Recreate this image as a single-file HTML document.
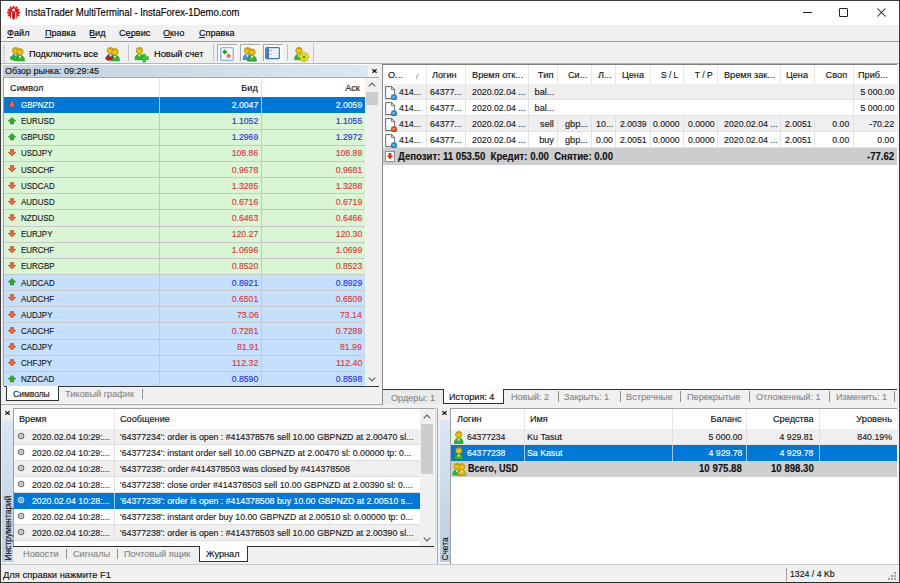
<!DOCTYPE html>
<html><head><meta charset="utf-8">
<style>
*{margin:0;padding:0;box-sizing:border-box}
html,body{width:900px;height:583px;overflow:hidden;background:#f0f0f0;font-family:"Liberation Sans",sans-serif;font-size:10px;color:#1a1a1a;position:relative}
.a{position:absolute}
.t{position:absolute;white-space:nowrap;transform:scaleX(0.926);-webkit-text-stroke-width:0.15px}
svg{position:absolute;overflow:visible}
</style></head><body>

<div class="a" style="left:0px;top:0px;width:900px;height:25px;background:#ffffff;"></div>
<svg style="left:7px;top:5.5px" width="14" height="14" viewBox="0 0 14 14">
<g transform="translate(6.6 6.5)" fill="#e21a1a"><rect x="-0.9" y="-6.6" width="1.8" height="2.6" transform="rotate(0)"/><rect x="-0.9" y="-6.6" width="1.8" height="2.6" transform="rotate(30)"/><rect x="-0.9" y="-6.6" width="1.8" height="2.6" transform="rotate(60)"/><rect x="-0.9" y="-6.6" width="1.8" height="2.6" transform="rotate(90)"/><rect x="-0.9" y="-6.6" width="1.8" height="2.6" transform="rotate(120)"/><rect x="-0.9" y="-6.6" width="1.8" height="2.6" transform="rotate(150)"/><rect x="-0.9" y="-6.6" width="1.8" height="2.6" transform="rotate(180)"/><rect x="-0.9" y="-6.6" width="1.8" height="2.6" transform="rotate(210)"/><rect x="-0.9" y="-6.6" width="1.8" height="2.6" transform="rotate(240)"/><rect x="-0.9" y="-6.6" width="1.8" height="2.6" transform="rotate(270)"/><rect x="-0.9" y="-6.6" width="1.8" height="2.6" transform="rotate(300)"/><rect x="-0.9" y="-6.6" width="1.8" height="2.6" transform="rotate(330)"/><circle r="5.2"/></g>
<circle cx="6.7" cy="3.9" r="1.5" fill="#fff"/>
<rect x="4.1" y="6" width="1.1" height="6.6" fill="#fff"/>
<rect x="8.1" y="6" width="1.1" height="6.6" fill="#fff"/>
<rect x="5.7" y="5.8" width="1.9" height="7.6" fill="#b41818"/>
</svg>
<div class="t" style="top:5px;height:16px;line-height:16px;font-size:10.3px;color:#000;transform:scaleX(0.922);left:25px;transform-origin:0 50%;">InstaTrader MultiTerminal - InstaForex-1Demo.com</div>
<div class="a" style="left:803px;top:12px;width:9px;height:1px;background:#222"></div>
<div class="a" style="left:839px;top:8px;width:9px;height:8.5px;border:1.1px solid #222;border-radius:1px"></div>
<svg style="left:876.5px;top:8.3px" width="9" height="9" viewBox="0 0 9 9"><path d="M0.5 0.5L8.5 8.5M8.5 0.5L0.5 8.5" stroke="#222" stroke-width="1.05"/></svg>
<div class="a" style="left:0px;top:0px;width:900px;height:1px;background:#3c3c3c"></div>
<div class="a" style="left:0px;top:0px;width:1px;height:583px;background:#3c3c3c"></div>
<div class="a" style="left:899px;top:0px;width:1px;height:583px;background:#3c3c3c"></div>
<div class="a" style="left:0px;top:582px;width:900px;height:1px;background:#2a2a2a"></div>
<div class="t" style="top:25px;height:16px;line-height:16px;font-size:9.9px;color:#000;transform:scaleX(0.926);left:6.5px;transform-origin:0 50%;">Файл</div>
<div class="t" style="top:25px;height:16px;line-height:16px;font-size:9.9px;color:#000;transform:scaleX(0.92);left:44.5px;transform-origin:0 50%;">Правка</div>
<div class="t" style="top:25px;height:16px;line-height:16px;font-size:9.9px;color:#000;transform:scaleX(0.926);left:89.3px;transform-origin:0 50%;">Вид</div>
<div class="t" style="top:25px;height:16px;line-height:16px;font-size:9.9px;color:#000;transform:scaleX(0.926);left:118.7px;transform-origin:0 50%;">Сервис</div>
<div class="t" style="top:25px;height:16px;line-height:16px;font-size:9.9px;color:#000;transform:scaleX(0.926);left:163px;transform-origin:0 50%;">Окно</div>
<div class="t" style="top:25px;height:16px;line-height:16px;font-size:9.9px;color:#000;transform:scaleX(0.921);left:198.7px;transform-origin:0 50%;">Справка</div>
<div class="a" style="left:1px;top:41px;width:898px;height:1px;background:#a0a0a0"></div>
<div class="a" style="left:1px;top:63px;width:898px;height:1px;background:#b4b4b4"></div>
<div class="a" style="left:7px;top:37px;width:6px;height:1px;background:#2a2a2a"></div>
<div class="a" style="left:45px;top:37px;width:6px;height:1px;background:#2a2a2a"></div>
<div class="a" style="left:89.5px;top:37px;width:6px;height:1px;background:#2a2a2a"></div>
<div class="a" style="left:127.5px;top:37px;width:5px;height:1px;background:#2a2a2a"></div>
<div class="a" style="left:163.5px;top:37px;width:7px;height:1px;background:#2a2a2a"></div>
<div class="a" style="left:199px;top:37px;width:6px;height:1px;background:#2a2a2a"></div>
<div class="a" style="left:3px;top:45px;width:2px;height:1px;background:#c4c4c4"></div>
<div class="a" style="left:3px;top:47px;width:2px;height:1px;background:#c4c4c4"></div>
<div class="a" style="left:3px;top:49px;width:2px;height:1px;background:#c4c4c4"></div>
<div class="a" style="left:3px;top:51px;width:2px;height:1px;background:#c4c4c4"></div>
<div class="a" style="left:3px;top:53px;width:2px;height:1px;background:#c4c4c4"></div>
<div class="a" style="left:3px;top:55px;width:2px;height:1px;background:#c4c4c4"></div>
<div class="a" style="left:3px;top:57px;width:2px;height:1px;background:#c4c4c4"></div>
<div class="a" style="left:3px;top:59px;width:2px;height:1px;background:#c4c4c4"></div>
<div class="a" style="left:3px;top:61px;width:2px;height:1px;background:#c4c4c4"></div>
<svg style="left:10px;top:46px" width="16" height="16" viewBox="0 0 16 16"><g transform="translate(0.5 0) scale(1.0)"><path d="M0.6 13.6C0.6 9.6 2.4 8.4 5 8.4C7.6 8.4 9.4 9.6 9.4 13.6Z" fill="#3aa0d8" stroke="#1d6aa0" stroke-width="0.7"/><path d="M3.7 8.6L5 11.6L6.3 8.6Z" fill="#e8f8e8"/><circle cx="5" cy="4.6" r="3.2" fill="#f2c200" stroke="#a87c00" stroke-width="0.7"/><path d="M2.2 3.6Q5 0.6 7.8 3.6Q5 2.6 2.2 3.6Z" fill="#a87c00" opacity="0.6"/></g><g transform="translate(5 1.2) scale(1.0)"><path d="M0.6 13.6C0.6 9.6 2.4 8.4 5 8.4C7.6 8.4 9.4 9.6 9.4 13.6Z" fill="#2db82d" stroke="#168a16" stroke-width="0.7"/><path d="M3.7 8.6L5 11.6L6.3 8.6Z" fill="#e8f8e8"/><circle cx="5" cy="4.6" r="3.2" fill="#f2c200" stroke="#a87c00" stroke-width="0.7"/><path d="M2.2 3.6Q5 0.6 7.8 3.6Q5 2.6 2.2 3.6Z" fill="#a87c00" opacity="0.6"/></g>
<path d="M0.5 11h3.6V9l3.4 3l-3.4 3v-2H0.5z" fill="#2ccc2c" stroke="#128a12" stroke-width="0.6"/></svg>
<div class="t" style="top:45px;height:17px;line-height:17px;font-size:9.9px;color:#000;transform:scaleX(0.931);left:28.8px;transform-origin:0 50%;">Подключить все</div>
<svg style="left:105px;top:46px" width="16" height="16" viewBox="0 0 16 16"><g transform="translate(0.5 0) scale(1.0)"><path d="M0.6 13.6C0.6 9.6 2.4 8.4 5 8.4C7.6 8.4 9.4 9.6 9.4 13.6Z" fill="#3aa0d8" stroke="#1d6aa0" stroke-width="0.7"/><path d="M3.7 8.6L5 11.6L6.3 8.6Z" fill="#e8f8e8"/><circle cx="5" cy="4.6" r="3.2" fill="#f2c200" stroke="#a87c00" stroke-width="0.7"/><path d="M2.2 3.6Q5 0.6 7.8 3.6Q5 2.6 2.2 3.6Z" fill="#a87c00" opacity="0.6"/></g><g transform="translate(5 1.2) scale(1.0)"><path d="M0.6 13.6C0.6 9.6 2.4 8.4 5 8.4C7.6 8.4 9.4 9.6 9.4 13.6Z" fill="#2db82d" stroke="#168a16" stroke-width="0.7"/><path d="M3.7 8.6L5 11.6L6.3 8.6Z" fill="#e8f8e8"/><circle cx="5" cy="4.6" r="3.2" fill="#f2c200" stroke="#a87c00" stroke-width="0.7"/><path d="M2.2 3.6Q5 0.6 7.8 3.6Q5 2.6 2.2 3.6Z" fill="#a87c00" opacity="0.6"/></g>
<path d="M7.5 11H3.9V9L0.5 12l3.4 3v-2h3.6z" fill="#e01818" stroke="#8a0a0a" stroke-width="0.6"/></svg>
<div class="a" style="left:128px;top:44px;width:1px;height:17px;background:#c4c4c4"></div>
<svg style="left:134px;top:46px" width="16" height="16" viewBox="0 0 16 16"><g transform="translate(0.5 0) scale(1.0)"><path d="M0.6 13.6C0.6 9.6 2.4 8.4 5 8.4C7.6 8.4 9.4 9.6 9.4 13.6Z" fill="#2db82d" stroke="#168a16" stroke-width="0.7"/><path d="M3.7 8.6L5 11.6L6.3 8.6Z" fill="#e8f8e8"/><circle cx="5" cy="4.6" r="3.2" fill="#f2c200" stroke="#a87c00" stroke-width="0.7"/><path d="M2.2 3.6Q5 0.6 7.8 3.6Q5 2.6 2.2 3.6Z" fill="#a87c00" opacity="0.6"/></g>
<path d="M9 8.2h2.6v2.6h2.8v2.6h-2.8v2.6H9v-2.6H6.2v-2.6H9z" fill="#36d236" stroke="#149014" stroke-width="0.6"/></svg>
<div class="t" style="top:45px;height:17px;line-height:17px;font-size:9.9px;color:#000;transform:scaleX(0.934);left:153.5px;transform-origin:0 50%;">Новый счет</div>
<div class="a" style="left:212.5px;top:44px;width:1px;height:17px;background:#c4c4c4"></div>
<div class="a" style="left:217px;top:44px;width:20px;height:17px;background:#f7f7f7;border-left:1px solid #a8a8a8;border-top:1px solid #a8a8a8"></div>
<div class="a" style="left:240px;top:44px;width:20px;height:17px;background:#f7f7f7;border-left:1px solid #a8a8a8;border-top:1px solid #a8a8a8"></div>
<div class="a" style="left:262.5px;top:44px;width:20px;height:17px;background:#f7f7f7;border-left:1px solid #a8a8a8;border-top:1px solid #a8a8a8"></div>
<svg style="left:220px;top:47px" width="14" height="14" viewBox="0 0 14 14"><rect x="0.8" y="0.8" width="12.4" height="12.4" rx="1" fill="#fff" stroke="#6aa2d8" stroke-width="1.1"/>
<path d="M4.8 2.6l2.3 2.3l-2.3 2.3l-2.3 -2.3z" fill="#1eaa1e" stroke="#0c700c" stroke-width="0.4"/><path d="M8.6 6.6l2.3 2.3l-2.3 2.3l-2.3 -2.3z" fill="#f07050" stroke="#c04020" stroke-width="0.4"/></svg>
<svg style="left:242px;top:46px" width="16" height="16" viewBox="0 0 16 16"><g transform="translate(0.5 0) scale(1.0)"><path d="M0.6 13.6C0.6 9.6 2.4 8.4 5 8.4C7.6 8.4 9.4 9.6 9.4 13.6Z" fill="#3a9ae0" stroke="#1c6aa8" stroke-width="0.7"/><path d="M3.7 8.6L5 11.6L6.3 8.6Z" fill="#e8f8e8"/><circle cx="5" cy="4.6" r="3.2" fill="#f2c200" stroke="#a87c00" stroke-width="0.7"/><path d="M2.2 3.6Q5 0.6 7.8 3.6Q5 2.6 2.2 3.6Z" fill="#a87c00" opacity="0.6"/></g><g transform="translate(5 1.5) scale(1.0)"><path d="M0.6 13.6C0.6 9.6 2.4 8.4 5 8.4C7.6 8.4 9.4 9.6 9.4 13.6Z" fill="#2db82d" stroke="#168a16" stroke-width="0.7"/><path d="M3.7 8.6L5 11.6L6.3 8.6Z" fill="#e8f8e8"/><circle cx="5" cy="4.6" r="3.2" fill="#f2c200" stroke="#a87c00" stroke-width="0.7"/><path d="M2.2 3.6Q5 0.6 7.8 3.6Q5 2.6 2.2 3.6Z" fill="#a87c00" opacity="0.6"/></g></svg>
<svg style="left:265px;top:47px" width="15" height="13" viewBox="0 0 15 13"><rect x="0.7" y="0.7" width="13.6" height="11" rx="1" fill="#f6f9fd" stroke="#3a74b8" stroke-width="1.2"/><rect x="1.2" y="1.2" width="2.8" height="10" fill="#3f78c0"/><path d="M4.5 3.5h2" stroke="#e05050" stroke-width="0.8"/><path d="M4.5 7h2" stroke="#e05050" stroke-width="0.8"/><path d="M7 3.5h6M7 6h6M7 8.5h6" stroke="#d8e2f0" stroke-width="0.7"/></svg>
<div class="a" style="left:286.5px;top:44px;width:1px;height:17px;background:#c4c4c4"></div>
<svg style="left:293px;top:46px" width="16" height="16" viewBox="0 0 16 16"><g transform="translate(1 0) scale(1.0)"><path d="M0.6 13.6C0.6 9.6 2.4 8.4 5 8.4C7.6 8.4 9.4 9.6 9.4 13.6Z" fill="#2db82d" stroke="#168a16" stroke-width="0.7"/><path d="M3.7 8.6L5 11.6L6.3 8.6Z" fill="#e8f8e8"/><circle cx="5" cy="4.6" r="3.2" fill="#f2c200" stroke="#a87c00" stroke-width="0.7"/><path d="M2.2 3.6Q5 0.6 7.8 3.6Q5 2.6 2.2 3.6Z" fill="#a87c00" opacity="0.6"/></g>
<g transform="translate(11 11)"><circle r="3.6" fill="#e6e020" stroke="#a8a000" stroke-width="0.5"/><g fill="#e6e020" stroke="#a8a000" stroke-width="0.4"><rect x="-1" y="-5" width="2" height="10"/><rect x="-1" y="-5" width="2" height="10" transform="rotate(45)"/><rect x="-1" y="-5" width="2" height="10" transform="rotate(90)"/><rect x="-1" y="-5" width="2" height="10" transform="rotate(135)"/></g><circle r="3" fill="#e6e020"/><circle r="1.2" fill="#2a9a2a"/></g></svg>
<div class="a" style="left:313px;top:43px;width:1px;height:19px;background:#c4c4c4"></div>
<div class="a" style="left:1px;top:64px;width:379px;height:340px;background:#f0f0f0;"></div>
<div class="a" style="left:1px;top:64px;width:379px;height:1px;background:#fbfbfb"></div>
<div class="a" style="left:3px;top:65px;width:365px;height:12px;background:linear-gradient(to right,#c2d1e0,#dae7f3);"></div>
<div class="t" style="top:64px;height:14px;line-height:14px;font-size:9.9px;color:#111;transform:scaleX(0.91);left:5px;transform-origin:0 50%;">Обзор рынка: 09:29:45</div>
<svg style="left:372.3px;top:68.5px" width="5" height="4" viewBox="0 0 5 4"><path d="M0.4 0.3L4.6 3.7M4.6 0.3L0.4 3.7" stroke="#111" stroke-width="1.2"/></svg>
<div class="a" style="left:3px;top:77px;width:376px;height:1px;background:#a8a8a8"></div>
<div class="a" style="left:4px;top:78px;width:361px;height:308px;background:#ffffff;"></div>
<div class="a" style="left:3px;top:77px;width:1px;height:309px;background:#a0a0a0"></div>
<div class="a" style="left:365px;top:78px;width:14px;height:308px;background:#f0f0f0;"></div>
<svg style="left:368px;top:82px" width="8" height="5" viewBox="0 0 8 5"><path d="M0.7 4.3L4 1L7.3 4.3" stroke="#606060" stroke-width="1.2" fill="none"/></svg>
<div class="a" style="left:366px;top:91.5px;width:12px;height:13.5px;background:#cdcdcd;"></div>
<svg style="left:368px;top:377px" width="8" height="5" viewBox="0 0 8 5"><path d="M0.7 0.7L4 4L7.3 0.7" stroke="#606060" stroke-width="1.2" fill="none"/></svg>
<div class="t" style="top:78px;height:19px;line-height:19px;font-size:9.9px;color:#111;transform:scaleX(0.935);left:10px;transform-origin:0 50%;">Символ</div>
<div class="a" style="left:159px;top:78px;width:1px;height:19px;background:#e4e4e4"></div>
<div class="t" style="top:78px;height:19px;line-height:19px;font-size:9.9px;color:#111;transform:scaleX(0.926);right:642.5px;transform-origin:100% 50%;">Бид</div>
<div class="a" style="left:261px;top:78px;width:1px;height:19px;background:#e4e4e4"></div>
<div class="t" style="top:78px;height:19px;line-height:19px;font-size:9.9px;color:#111;transform:scaleX(0.926);right:540px;transform-origin:100% 50%;">Аск</div>
<div class="a" style="left:4px;top:97.0px;width:361px;height:16.14px;background:#0078d7;"></div>
<div class="a" style="left:159px;top:97.0px;width:1px;height:16.14px;background:#a8c8ec"></div>
<div class="a" style="left:261px;top:97.0px;width:1px;height:16.14px;background:#a8c8ec"></div>
<svg style="left:7.8px;top:100.8px" width="8" height="7.5" viewBox="0 0 8 7.5"><path d="M2.4 0.6h3.2v2.8h2.1L4 6.9L0.3 3.4h2.1z" fill="#f26a36" stroke="#b8300e" stroke-width="0.6" stroke-linejoin="round"/></svg>
<div class="t" style="top:97.0px;height:16.14px;line-height:16.14px;font-size:9.9px;color:#fff;transform:scaleX(0.808);left:20.5px;transform-origin:0 50%;">GBPNZD</div>
<div class="t" style="top:97.0px;height:16.14px;line-height:16.14px;font-size:9.9px;color:#fff;transform:scaleX(0.879);right:641.5px;transform-origin:100% 50%;">2.0047</div>
<div class="t" style="top:97.0px;height:16.14px;line-height:16.14px;font-size:9.9px;color:#fff;transform:scaleX(0.879);right:538px;transform-origin:100% 50%;">2.0059</div>
<div class="a" style="left:4px;top:113.14px;width:361px;height:16.14px;background:#d8f5d4;"></div>
<div class="a" style="left:159px;top:113.14px;width:1px;height:16.14px;background:#c8c8c8"></div>
<div class="a" style="left:261px;top:113.14px;width:1px;height:16.14px;background:#c8c8c8"></div>
<svg style="left:7.8px;top:116.94px" width="8" height="7.5" viewBox="0 0 8 7.5"><path d="M2.4 6.9h3.2V4.1h2.1L4 0.6L0.3 4.1h2.1z" fill="#2eb02e" stroke="#127a12" stroke-width="0.6" stroke-linejoin="round"/></svg>
<div class="t" style="top:113.14px;height:16.14px;line-height:16.14px;font-size:9.9px;color:#1a1a1a;transform:scaleX(0.808);left:20.5px;transform-origin:0 50%;">EURUSD</div>
<div class="t" style="top:113.14px;height:16.14px;line-height:16.14px;font-size:9.9px;color:#3030dd;transform:scaleX(0.879);right:641.5px;transform-origin:100% 50%;">1.1052</div>
<div class="t" style="top:113.14px;height:16.14px;line-height:16.14px;font-size:9.9px;color:#3030dd;transform:scaleX(0.879);right:538px;transform-origin:100% 50%;">1.1055</div>
<div class="a" style="left:4px;top:129.28px;width:361px;height:16.14px;background:#d8f5d4;"></div>
<div class="a" style="left:159px;top:129.28px;width:1px;height:16.14px;background:#c8c8c8"></div>
<div class="a" style="left:261px;top:129.28px;width:1px;height:16.14px;background:#c8c8c8"></div>
<svg style="left:7.8px;top:133.08px" width="8" height="7.5" viewBox="0 0 8 7.5"><path d="M2.4 6.9h3.2V4.1h2.1L4 0.6L0.3 4.1h2.1z" fill="#2eb02e" stroke="#127a12" stroke-width="0.6" stroke-linejoin="round"/></svg>
<div class="t" style="top:129.28px;height:16.14px;line-height:16.14px;font-size:9.9px;color:#1a1a1a;transform:scaleX(0.808);left:20.5px;transform-origin:0 50%;">GBPUSD</div>
<div class="t" style="top:129.28px;height:16.14px;line-height:16.14px;font-size:9.9px;color:#3030dd;transform:scaleX(0.879);right:641.5px;transform-origin:100% 50%;">1.2969</div>
<div class="t" style="top:129.28px;height:16.14px;line-height:16.14px;font-size:9.9px;color:#3030dd;transform:scaleX(0.879);right:538px;transform-origin:100% 50%;">1.2972</div>
<div class="a" style="left:4px;top:145.42px;width:361px;height:16.14px;background:#d8f5d4;"></div>
<div class="a" style="left:159px;top:145.42px;width:1px;height:16.14px;background:#c8c8c8"></div>
<div class="a" style="left:261px;top:145.42px;width:1px;height:16.14px;background:#c8c8c8"></div>
<svg style="left:7.8px;top:149.22px" width="8" height="7.5" viewBox="0 0 8 7.5"><path d="M2.4 0.6h3.2v2.8h2.1L4 6.9L0.3 3.4h2.1z" fill="#f26a36" stroke="#b8300e" stroke-width="0.6" stroke-linejoin="round"/></svg>
<div class="t" style="top:145.42px;height:16.14px;line-height:16.14px;font-size:9.9px;color:#1a1a1a;transform:scaleX(0.808);left:20.5px;transform-origin:0 50%;">USDJPY</div>
<div class="t" style="top:145.42px;height:16.14px;line-height:16.14px;font-size:9.9px;color:#e03838;transform:scaleX(0.879);right:641.5px;transform-origin:100% 50%;">108.86</div>
<div class="t" style="top:145.42px;height:16.14px;line-height:16.14px;font-size:9.9px;color:#e03838;transform:scaleX(0.879);right:538px;transform-origin:100% 50%;">108.89</div>
<div class="a" style="left:4px;top:161.56px;width:361px;height:16.14px;background:#d8f5d4;"></div>
<div class="a" style="left:159px;top:161.56px;width:1px;height:16.14px;background:#c8c8c8"></div>
<div class="a" style="left:261px;top:161.56px;width:1px;height:16.14px;background:#c8c8c8"></div>
<svg style="left:7.8px;top:165.36px" width="8" height="7.5" viewBox="0 0 8 7.5"><path d="M2.4 0.6h3.2v2.8h2.1L4 6.9L0.3 3.4h2.1z" fill="#f26a36" stroke="#b8300e" stroke-width="0.6" stroke-linejoin="round"/></svg>
<div class="t" style="top:161.56px;height:16.14px;line-height:16.14px;font-size:9.9px;color:#1a1a1a;transform:scaleX(0.808);left:20.5px;transform-origin:0 50%;">USDCHF</div>
<div class="t" style="top:161.56px;height:16.14px;line-height:16.14px;font-size:9.9px;color:#e03838;transform:scaleX(0.879);right:641.5px;transform-origin:100% 50%;">0.9678</div>
<div class="t" style="top:161.56px;height:16.14px;line-height:16.14px;font-size:9.9px;color:#e03838;transform:scaleX(0.879);right:538px;transform-origin:100% 50%;">0.9681</div>
<div class="a" style="left:4px;top:177.7px;width:361px;height:16.14px;background:#d8f5d4;"></div>
<div class="a" style="left:159px;top:177.7px;width:1px;height:16.14px;background:#c8c8c8"></div>
<div class="a" style="left:261px;top:177.7px;width:1px;height:16.14px;background:#c8c8c8"></div>
<svg style="left:7.8px;top:181.5px" width="8" height="7.5" viewBox="0 0 8 7.5"><path d="M2.4 0.6h3.2v2.8h2.1L4 6.9L0.3 3.4h2.1z" fill="#f26a36" stroke="#b8300e" stroke-width="0.6" stroke-linejoin="round"/></svg>
<div class="t" style="top:177.7px;height:16.14px;line-height:16.14px;font-size:9.9px;color:#1a1a1a;transform:scaleX(0.808);left:20.5px;transform-origin:0 50%;">USDCAD</div>
<div class="t" style="top:177.7px;height:16.14px;line-height:16.14px;font-size:9.9px;color:#e03838;transform:scaleX(0.879);right:641.5px;transform-origin:100% 50%;">1.3285</div>
<div class="t" style="top:177.7px;height:16.14px;line-height:16.14px;font-size:9.9px;color:#e03838;transform:scaleX(0.879);right:538px;transform-origin:100% 50%;">1.3288</div>
<div class="a" style="left:4px;top:193.84px;width:361px;height:16.14px;background:#d8f5d4;"></div>
<div class="a" style="left:159px;top:193.84px;width:1px;height:16.14px;background:#c8c8c8"></div>
<div class="a" style="left:261px;top:193.84px;width:1px;height:16.14px;background:#c8c8c8"></div>
<svg style="left:7.8px;top:197.64000000000001px" width="8" height="7.5" viewBox="0 0 8 7.5"><path d="M2.4 0.6h3.2v2.8h2.1L4 6.9L0.3 3.4h2.1z" fill="#f26a36" stroke="#b8300e" stroke-width="0.6" stroke-linejoin="round"/></svg>
<div class="t" style="top:193.84px;height:16.14px;line-height:16.14px;font-size:9.9px;color:#1a1a1a;transform:scaleX(0.808);left:20.5px;transform-origin:0 50%;">AUDUSD</div>
<div class="t" style="top:193.84px;height:16.14px;line-height:16.14px;font-size:9.9px;color:#e03838;transform:scaleX(0.879);right:641.5px;transform-origin:100% 50%;">0.6716</div>
<div class="t" style="top:193.84px;height:16.14px;line-height:16.14px;font-size:9.9px;color:#e03838;transform:scaleX(0.879);right:538px;transform-origin:100% 50%;">0.6719</div>
<div class="a" style="left:4px;top:209.98px;width:361px;height:16.14px;background:#d8f5d4;"></div>
<div class="a" style="left:159px;top:209.98px;width:1px;height:16.14px;background:#c8c8c8"></div>
<div class="a" style="left:261px;top:209.98px;width:1px;height:16.14px;background:#c8c8c8"></div>
<svg style="left:7.8px;top:213.78px" width="8" height="7.5" viewBox="0 0 8 7.5"><path d="M2.4 0.6h3.2v2.8h2.1L4 6.9L0.3 3.4h2.1z" fill="#f26a36" stroke="#b8300e" stroke-width="0.6" stroke-linejoin="round"/></svg>
<div class="t" style="top:209.98px;height:16.14px;line-height:16.14px;font-size:9.9px;color:#1a1a1a;transform:scaleX(0.808);left:20.5px;transform-origin:0 50%;">NZDUSD</div>
<div class="t" style="top:209.98px;height:16.14px;line-height:16.14px;font-size:9.9px;color:#e03838;transform:scaleX(0.879);right:641.5px;transform-origin:100% 50%;">0.6463</div>
<div class="t" style="top:209.98px;height:16.14px;line-height:16.14px;font-size:9.9px;color:#e03838;transform:scaleX(0.879);right:538px;transform-origin:100% 50%;">0.6466</div>
<div class="a" style="left:4px;top:226.12px;width:361px;height:16.14px;background:#d8f5d4;"></div>
<div class="a" style="left:159px;top:226.12px;width:1px;height:16.14px;background:#c8c8c8"></div>
<div class="a" style="left:261px;top:226.12px;width:1px;height:16.14px;background:#c8c8c8"></div>
<svg style="left:7.8px;top:229.92000000000002px" width="8" height="7.5" viewBox="0 0 8 7.5"><path d="M2.4 0.6h3.2v2.8h2.1L4 6.9L0.3 3.4h2.1z" fill="#f26a36" stroke="#b8300e" stroke-width="0.6" stroke-linejoin="round"/></svg>
<div class="t" style="top:226.12px;height:16.14px;line-height:16.14px;font-size:9.9px;color:#1a1a1a;transform:scaleX(0.808);left:20.5px;transform-origin:0 50%;">EURJPY</div>
<div class="t" style="top:226.12px;height:16.14px;line-height:16.14px;font-size:9.9px;color:#e03838;transform:scaleX(0.879);right:641.5px;transform-origin:100% 50%;">120.27</div>
<div class="t" style="top:226.12px;height:16.14px;line-height:16.14px;font-size:9.9px;color:#e03838;transform:scaleX(0.879);right:538px;transform-origin:100% 50%;">120.30</div>
<div class="a" style="left:4px;top:242.26px;width:361px;height:16.14px;background:#d8f5d4;"></div>
<div class="a" style="left:159px;top:242.26px;width:1px;height:16.14px;background:#c8c8c8"></div>
<div class="a" style="left:261px;top:242.26px;width:1px;height:16.14px;background:#c8c8c8"></div>
<svg style="left:7.8px;top:246.06px" width="8" height="7.5" viewBox="0 0 8 7.5"><path d="M2.4 0.6h3.2v2.8h2.1L4 6.9L0.3 3.4h2.1z" fill="#f26a36" stroke="#b8300e" stroke-width="0.6" stroke-linejoin="round"/></svg>
<div class="t" style="top:242.26px;height:16.14px;line-height:16.14px;font-size:9.9px;color:#1a1a1a;transform:scaleX(0.808);left:20.5px;transform-origin:0 50%;">EURCHF</div>
<div class="t" style="top:242.26px;height:16.14px;line-height:16.14px;font-size:9.9px;color:#e03838;transform:scaleX(0.879);right:641.5px;transform-origin:100% 50%;">1.0696</div>
<div class="t" style="top:242.26px;height:16.14px;line-height:16.14px;font-size:9.9px;color:#e03838;transform:scaleX(0.879);right:538px;transform-origin:100% 50%;">1.0699</div>
<div class="a" style="left:4px;top:258.4px;width:361px;height:16.14px;background:#d8f5d4;"></div>
<div class="a" style="left:159px;top:258.4px;width:1px;height:16.14px;background:#c8c8c8"></div>
<div class="a" style="left:261px;top:258.4px;width:1px;height:16.14px;background:#c8c8c8"></div>
<svg style="left:7.8px;top:262.2px" width="8" height="7.5" viewBox="0 0 8 7.5"><path d="M2.4 0.6h3.2v2.8h2.1L4 6.9L0.3 3.4h2.1z" fill="#f26a36" stroke="#b8300e" stroke-width="0.6" stroke-linejoin="round"/></svg>
<div class="t" style="top:258.4px;height:16.14px;line-height:16.14px;font-size:9.9px;color:#1a1a1a;transform:scaleX(0.808);left:20.5px;transform-origin:0 50%;">EURGBP</div>
<div class="t" style="top:258.4px;height:16.14px;line-height:16.14px;font-size:9.9px;color:#e03838;transform:scaleX(0.879);right:641.5px;transform-origin:100% 50%;">0.8520</div>
<div class="t" style="top:258.4px;height:16.14px;line-height:16.14px;font-size:9.9px;color:#e03838;transform:scaleX(0.879);right:538px;transform-origin:100% 50%;">0.8523</div>
<div class="a" style="left:4px;top:274.54px;width:361px;height:16.14px;background:#c4e0fc;"></div>
<div class="a" style="left:159px;top:274.54px;width:1px;height:16.14px;background:#c8c8c8"></div>
<div class="a" style="left:261px;top:274.54px;width:1px;height:16.14px;background:#c8c8c8"></div>
<svg style="left:7.8px;top:278.34000000000003px" width="8" height="7.5" viewBox="0 0 8 7.5"><path d="M2.4 6.9h3.2V4.1h2.1L4 0.6L0.3 4.1h2.1z" fill="#2eb02e" stroke="#127a12" stroke-width="0.6" stroke-linejoin="round"/></svg>
<div class="t" style="top:274.54px;height:16.14px;line-height:16.14px;font-size:9.9px;color:#1a1a1a;transform:scaleX(0.808);left:20.5px;transform-origin:0 50%;">AUDCAD</div>
<div class="t" style="top:274.54px;height:16.14px;line-height:16.14px;font-size:9.9px;color:#3030dd;transform:scaleX(0.879);right:641.5px;transform-origin:100% 50%;">0.8921</div>
<div class="t" style="top:274.54px;height:16.14px;line-height:16.14px;font-size:9.9px;color:#3030dd;transform:scaleX(0.879);right:538px;transform-origin:100% 50%;">0.8929</div>
<div class="a" style="left:4px;top:290.68px;width:361px;height:16.14px;background:#c4e0fc;"></div>
<div class="a" style="left:159px;top:290.68px;width:1px;height:16.14px;background:#c8c8c8"></div>
<div class="a" style="left:261px;top:290.68px;width:1px;height:16.14px;background:#c8c8c8"></div>
<svg style="left:7.8px;top:294.48px" width="8" height="7.5" viewBox="0 0 8 7.5"><path d="M2.4 0.6h3.2v2.8h2.1L4 6.9L0.3 3.4h2.1z" fill="#f26a36" stroke="#b8300e" stroke-width="0.6" stroke-linejoin="round"/></svg>
<div class="t" style="top:290.68px;height:16.14px;line-height:16.14px;font-size:9.9px;color:#1a1a1a;transform:scaleX(0.808);left:20.5px;transform-origin:0 50%;">AUDCHF</div>
<div class="t" style="top:290.68px;height:16.14px;line-height:16.14px;font-size:9.9px;color:#e03838;transform:scaleX(0.879);right:641.5px;transform-origin:100% 50%;">0.6501</div>
<div class="t" style="top:290.68px;height:16.14px;line-height:16.14px;font-size:9.9px;color:#e03838;transform:scaleX(0.879);right:538px;transform-origin:100% 50%;">0.6509</div>
<div class="a" style="left:4px;top:306.82px;width:361px;height:16.14px;background:#c4e0fc;"></div>
<div class="a" style="left:159px;top:306.82px;width:1px;height:16.14px;background:#c8c8c8"></div>
<div class="a" style="left:261px;top:306.82px;width:1px;height:16.14px;background:#c8c8c8"></div>
<svg style="left:7.8px;top:310.62px" width="8" height="7.5" viewBox="0 0 8 7.5"><path d="M2.4 0.6h3.2v2.8h2.1L4 6.9L0.3 3.4h2.1z" fill="#f26a36" stroke="#b8300e" stroke-width="0.6" stroke-linejoin="round"/></svg>
<div class="t" style="top:306.82px;height:16.14px;line-height:16.14px;font-size:9.9px;color:#1a1a1a;transform:scaleX(0.808);left:20.5px;transform-origin:0 50%;">AUDJPY</div>
<div class="t" style="top:306.82px;height:16.14px;line-height:16.14px;font-size:9.9px;color:#e03838;transform:scaleX(0.88);right:641.5px;transform-origin:100% 50%;">73.06</div>
<div class="t" style="top:306.82px;height:16.14px;line-height:16.14px;font-size:9.9px;color:#e03838;transform:scaleX(0.88);right:538px;transform-origin:100% 50%;">73.14</div>
<div class="a" style="left:4px;top:322.96px;width:361px;height:16.14px;background:#c4e0fc;"></div>
<div class="a" style="left:159px;top:322.96px;width:1px;height:16.14px;background:#c8c8c8"></div>
<div class="a" style="left:261px;top:322.96px;width:1px;height:16.14px;background:#c8c8c8"></div>
<svg style="left:7.8px;top:326.76px" width="8" height="7.5" viewBox="0 0 8 7.5"><path d="M2.4 0.6h3.2v2.8h2.1L4 6.9L0.3 3.4h2.1z" fill="#f26a36" stroke="#b8300e" stroke-width="0.6" stroke-linejoin="round"/></svg>
<div class="t" style="top:322.96px;height:16.14px;line-height:16.14px;font-size:9.9px;color:#1a1a1a;transform:scaleX(0.808);left:20.5px;transform-origin:0 50%;">CADCHF</div>
<div class="t" style="top:322.96px;height:16.14px;line-height:16.14px;font-size:9.9px;color:#e03838;transform:scaleX(0.879);right:641.5px;transform-origin:100% 50%;">0.7281</div>
<div class="t" style="top:322.96px;height:16.14px;line-height:16.14px;font-size:9.9px;color:#e03838;transform:scaleX(0.879);right:538px;transform-origin:100% 50%;">0.7289</div>
<div class="a" style="left:4px;top:339.1px;width:361px;height:16.14px;background:#c4e0fc;"></div>
<div class="a" style="left:159px;top:339.1px;width:1px;height:16.14px;background:#c8c8c8"></div>
<div class="a" style="left:261px;top:339.1px;width:1px;height:16.14px;background:#c8c8c8"></div>
<svg style="left:7.8px;top:342.90000000000003px" width="8" height="7.5" viewBox="0 0 8 7.5"><path d="M2.4 0.6h3.2v2.8h2.1L4 6.9L0.3 3.4h2.1z" fill="#f26a36" stroke="#b8300e" stroke-width="0.6" stroke-linejoin="round"/></svg>
<div class="t" style="top:339.1px;height:16.14px;line-height:16.14px;font-size:9.9px;color:#1a1a1a;transform:scaleX(0.808);left:20.5px;transform-origin:0 50%;">CADJPY</div>
<div class="t" style="top:339.1px;height:16.14px;line-height:16.14px;font-size:9.9px;color:#e03838;transform:scaleX(0.88);right:641.5px;transform-origin:100% 50%;">81.91</div>
<div class="t" style="top:339.1px;height:16.14px;line-height:16.14px;font-size:9.9px;color:#e03838;transform:scaleX(0.88);right:538px;transform-origin:100% 50%;">81.99</div>
<div class="a" style="left:4px;top:355.24px;width:361px;height:16.14px;background:#c4e0fc;"></div>
<div class="a" style="left:159px;top:355.24px;width:1px;height:16.14px;background:#c8c8c8"></div>
<div class="a" style="left:261px;top:355.24px;width:1px;height:16.14px;background:#c8c8c8"></div>
<svg style="left:7.8px;top:359.04px" width="8" height="7.5" viewBox="0 0 8 7.5"><path d="M2.4 0.6h3.2v2.8h2.1L4 6.9L0.3 3.4h2.1z" fill="#f26a36" stroke="#b8300e" stroke-width="0.6" stroke-linejoin="round"/></svg>
<div class="t" style="top:355.24px;height:16.14px;line-height:16.14px;font-size:9.9px;color:#1a1a1a;transform:scaleX(0.808);left:20.5px;transform-origin:0 50%;">CHFJPY</div>
<div class="t" style="top:355.24px;height:16.14px;line-height:16.14px;font-size:9.9px;color:#e03838;transform:scaleX(0.901);right:641.5px;transform-origin:100% 50%;">112.32</div>
<div class="t" style="top:355.24px;height:16.14px;line-height:16.14px;font-size:9.9px;color:#e03838;transform:scaleX(0.901);right:538px;transform-origin:100% 50%;">112.40</div>
<div class="a" style="left:4px;top:371.38px;width:361px;height:16.14px;background:#c4e0fc;"></div>
<div class="a" style="left:159px;top:371.38px;width:1px;height:16.14px;background:#c8c8c8"></div>
<div class="a" style="left:261px;top:371.38px;width:1px;height:16.14px;background:#c8c8c8"></div>
<svg style="left:7.8px;top:375.18px" width="8" height="7.5" viewBox="0 0 8 7.5"><path d="M2.4 6.9h3.2V4.1h2.1L4 0.6L0.3 4.1h2.1z" fill="#2eb02e" stroke="#127a12" stroke-width="0.6" stroke-linejoin="round"/></svg>
<div class="t" style="top:371.38px;height:16.14px;line-height:16.14px;font-size:9.9px;color:#1a1a1a;transform:scaleX(0.808);left:20.5px;transform-origin:0 50%;">NZDCAD</div>
<div class="t" style="top:371.38px;height:16.14px;line-height:16.14px;font-size:9.9px;color:#3030dd;transform:scaleX(0.879);right:641.5px;transform-origin:100% 50%;">0.8590</div>
<div class="t" style="top:371.38px;height:16.14px;line-height:16.14px;font-size:9.9px;color:#3030dd;transform:scaleX(0.879);right:538px;transform-origin:100% 50%;">0.8598</div>
<div class="a" style="left:4px;top:128.78px;width:361px;height:1px;background:#c8c8c8"></div>
<div class="a" style="left:4px;top:144.92px;width:361px;height:1px;background:#c8c8c8"></div>
<div class="a" style="left:4px;top:161.06px;width:361px;height:1px;background:#c8c8c8"></div>
<div class="a" style="left:4px;top:177.2px;width:361px;height:1px;background:#c8c8c8"></div>
<div class="a" style="left:4px;top:193.34px;width:361px;height:1px;background:#c8c8c8"></div>
<div class="a" style="left:4px;top:209.48px;width:361px;height:1px;background:#c8c8c8"></div>
<div class="a" style="left:4px;top:225.62px;width:361px;height:1px;background:#c8c8c8"></div>
<div class="a" style="left:4px;top:241.76px;width:361px;height:1px;background:#c8c8c8"></div>
<div class="a" style="left:4px;top:257.9px;width:361px;height:1px;background:#c8c8c8"></div>
<div class="a" style="left:4px;top:274.04px;width:361px;height:1px;background:#c8c8c8"></div>
<div class="a" style="left:4px;top:290.18px;width:361px;height:1px;background:#c8c8c8"></div>
<div class="a" style="left:4px;top:306.32px;width:361px;height:1px;background:#c8c8c8"></div>
<div class="a" style="left:4px;top:322.46px;width:361px;height:1px;background:#c8c8c8"></div>
<div class="a" style="left:4px;top:338.6px;width:361px;height:1px;background:#c8c8c8"></div>
<div class="a" style="left:4px;top:354.74px;width:361px;height:1px;background:#c8c8c8"></div>
<div class="a" style="left:4px;top:370.88px;width:361px;height:1px;background:#c8c8c8"></div>
<div class="a" style="left:4px;top:386px;width:375px;height:18px;background:#f0f0f0;"></div>
<div class="a" style="left:5.5px;top:386px;width:53px;height:15px;background:#fff;border:1.3px solid #303030;border-top:none"></div>
<div class="t" style="top:386px;height:15px;line-height:15px;font-size:9.9px;color:#111;transform:scaleX(0.86);left:13px;transform-origin:0 50%;">Символы</div>
<div class="t" style="top:386px;height:15px;line-height:15px;font-size:9.9px;color:#8a8a8a;transform:scaleX(0.93);left:65px;transform-origin:0 50%;">Тиковый график</div>
<div class="a" style="left:141.5px;top:389px;width:1px;height:10px;background:#909090"></div>
<div class="a" style="left:4px;top:386px;width:2px;height:1px;background:#383838"></div>
<div class="a" style="left:58px;top:386px;width:321px;height:1px;background:#383838"></div>
<div class="a" style="left:1px;top:403px;width:381px;height:1px;background:#fbfbfb"></div>
<div class="a" style="left:1px;top:404px;width:382px;height:1px;background:#a8a8a8"></div>
<div class="a" style="left:379px;top:64px;width:4px;height:340px;background:#f0f0f0"></div>
<div class="a" style="left:383px;top:65px;width:514px;height:324px;background:#ffffff;"></div>
<div class="a" style="left:382px;top:64px;width:1px;height:341px;background:#8c8c8c"></div>
<div class="a" style="left:382px;top:64px;width:516px;height:1px;background:#808080"></div>
<div class="a" style="left:897px;top:64px;width:1px;height:325px;background:#f4f4f4"></div>
<div class="a" style="left:426px;top:65px;width:1px;height:19px;background:#e6e6e6"></div>
<div class="a" style="left:465px;top:65px;width:1px;height:19px;background:#e6e6e6"></div>
<div class="a" style="left:528px;top:65px;width:1px;height:19px;background:#e6e6e6"></div>
<div class="a" style="left:557px;top:65px;width:1px;height:19px;background:#e6e6e6"></div>
<div class="a" style="left:591px;top:65px;width:1px;height:19px;background:#e6e6e6"></div>
<div class="a" style="left:615px;top:65px;width:1px;height:19px;background:#e6e6e6"></div>
<div class="a" style="left:650px;top:65px;width:1px;height:19px;background:#e6e6e6"></div>
<div class="a" style="left:683px;top:65px;width:1px;height:19px;background:#e6e6e6"></div>
<div class="a" style="left:717px;top:65px;width:1px;height:19px;background:#e6e6e6"></div>
<div class="a" style="left:780px;top:65px;width:1px;height:19px;background:#e6e6e6"></div>
<div class="a" style="left:814px;top:65px;width:1px;height:19px;background:#e6e6e6"></div>
<div class="a" style="left:853px;top:65px;width:1px;height:19px;background:#e6e6e6"></div>
<div class="t" style="top:65px;height:19px;line-height:19px;font-size:9.9px;color:#111;transform:scaleX(0.926);left:388px;transform-origin:0 50%;">О...</div>
<div class="t" style="top:65px;height:19px;line-height:19px;font-size:9.9px;color:#111;transform:scaleX(0.926);left:432px;transform-origin:0 50%;">Логин</div>
<div class="t" style="top:65px;height:19px;line-height:19px;font-size:9.9px;color:#111;transform:scaleX(0.93);left:472px;transform-origin:0 50%;">Время отк...</div>
<div class="t" style="top:65px;height:19px;line-height:19px;font-size:9.9px;color:#111;transform:scaleX(0.95);right:346.5px;transform-origin:100% 50%;">Тип</div>
<div class="t" style="top:65px;height:19px;line-height:19px;font-size:9.9px;color:#111;transform:scaleX(0.926);left:567.5px;transform-origin:0 50%;">Си...</div>
<div class="t" style="top:65px;height:19px;line-height:19px;font-size:9.9px;color:#111;transform:scaleX(0.926);left:597.5px;transform-origin:0 50%;">Л...</div>
<div class="t" style="top:65px;height:19px;line-height:19px;font-size:9.9px;color:#111;transform:scaleX(0.926);left:622px;transform-origin:0 50%;">Цена</div>
<div class="t" style="top:65px;height:19px;line-height:19px;font-size:9.9px;color:#111;transform:scaleX(0.856);right:221.5px;transform-origin:100% 50%;">S / L</div>
<div class="t" style="top:65px;height:19px;line-height:19px;font-size:9.9px;color:#111;transform:scaleX(0.862);right:187.5px;transform-origin:100% 50%;">T / P</div>
<div class="t" style="top:65px;height:19px;line-height:19px;font-size:9.9px;color:#111;transform:scaleX(0.926);left:724px;transform-origin:0 50%;">Время зак...</div>
<div class="t" style="top:65px;height:19px;line-height:19px;font-size:9.9px;color:#111;transform:scaleX(0.926);left:786px;transform-origin:0 50%;">Цена</div>
<div class="t" style="top:65px;height:19px;line-height:19px;font-size:9.9px;color:#111;transform:scaleX(0.93);right:52.5px;transform-origin:100% 50%;">Своп</div>
<div class="t" style="top:65px;height:19px;line-height:19px;font-size:9.9px;color:#111;transform:scaleX(0.926);left:858px;transform-origin:0 50%;">Приб...</div>
<div class="t" style="top:67px;height:19px;line-height:19px;font-size:8px;color:#8a8a8a;transform:scaleX(0.926);left:416px;transform-origin:0 50%;">/</div>
<div class="a" style="left:383.5px;top:84.0px;width:513.5px;height:16.0px;background:#efefef;"></div>
<div class="a" style="left:383.5px;top:99.0px;width:513.5px;height:1px;background:#e2e2e2"></div>
<svg style="left:384.5px;top:85.5px" width="13" height="15" viewBox="0 0 13 15"><path d="M0.6 0.6h6l3 3v9h-9z" fill="#fafafa" stroke="#5a5a5a" stroke-width="0.9"/><path d="M6.6 0.6v3h3" fill="none" stroke="#5a5a5a" stroke-width="0.8"/><circle cx="9" cy="11.4" r="2.9" fill="#2a8ee0" stroke="#1d5fa0" stroke-width="0.5"/><circle cx="8.6" cy="11" r="1.1" fill="#fff" opacity="0.45"/></svg>
<div class="a" style="left:426px;top:84.0px;width:1px;height:16.0px;background:#e2e2e2"></div>
<div class="a" style="left:465px;top:84.0px;width:1px;height:16.0px;background:#e2e2e2"></div>
<div class="a" style="left:528px;top:84.0px;width:1px;height:16.0px;background:#e2e2e2"></div>
<div class="a" style="left:853px;top:84.0px;width:1px;height:16.0px;background:#e2e2e2"></div>
<div class="t" style="top:84.0px;height:16.0px;line-height:16.0px;font-size:9.9px;color:#1a1a1a;transform:scaleX(0.891);left:399px;transform-origin:0 50%;">414...</div>
<div class="t" style="top:84.0px;height:16.0px;line-height:16.0px;font-size:9.9px;color:#1a1a1a;transform:scaleX(0.886);left:430px;transform-origin:0 50%;">64377...</div>
<div class="t" style="top:84.0px;height:16.0px;line-height:16.0px;font-size:9.9px;color:#1a1a1a;transform:scaleX(0.888);left:472px;transform-origin:0 50%;">2020.02.04 ...</div>
<div class="t" style="top:84.0px;height:16.0px;line-height:16.0px;font-size:9.9px;color:#1a1a1a;transform:scaleX(0.926);right:346px;transform-origin:100% 50%;">bal...</div>
<div class="t" style="top:84.0px;height:16.0px;line-height:16.0px;font-size:9.9px;color:#1a1a1a;transform:scaleX(0.881);right:6px;transform-origin:100% 50%;">5 000.00</div>
<div class="a" style="left:383.5px;top:100.0px;width:513.5px;height:16.0px;background:#ffffff;"></div>
<div class="a" style="left:383.5px;top:115.0px;width:513.5px;height:1px;background:#e2e2e2"></div>
<svg style="left:384.5px;top:101.5px" width="13" height="15" viewBox="0 0 13 15"><path d="M0.6 0.6h6l3 3v9h-9z" fill="#fafafa" stroke="#5a5a5a" stroke-width="0.9"/><path d="M6.6 0.6v3h3" fill="none" stroke="#5a5a5a" stroke-width="0.8"/><circle cx="9" cy="11.4" r="2.9" fill="#2a8ee0" stroke="#1d5fa0" stroke-width="0.5"/><circle cx="8.6" cy="11" r="1.1" fill="#fff" opacity="0.45"/></svg>
<div class="a" style="left:426px;top:100.0px;width:1px;height:16.0px;background:#e2e2e2"></div>
<div class="a" style="left:465px;top:100.0px;width:1px;height:16.0px;background:#e2e2e2"></div>
<div class="a" style="left:528px;top:100.0px;width:1px;height:16.0px;background:#e2e2e2"></div>
<div class="a" style="left:853px;top:100.0px;width:1px;height:16.0px;background:#e2e2e2"></div>
<div class="t" style="top:100.0px;height:16.0px;line-height:16.0px;font-size:9.9px;color:#1a1a1a;transform:scaleX(0.891);left:399px;transform-origin:0 50%;">414...</div>
<div class="t" style="top:100.0px;height:16.0px;line-height:16.0px;font-size:9.9px;color:#1a1a1a;transform:scaleX(0.886);left:430px;transform-origin:0 50%;">64377...</div>
<div class="t" style="top:100.0px;height:16.0px;line-height:16.0px;font-size:9.9px;color:#1a1a1a;transform:scaleX(0.888);left:472px;transform-origin:0 50%;">2020.02.04 ...</div>
<div class="t" style="top:100.0px;height:16.0px;line-height:16.0px;font-size:9.9px;color:#1a1a1a;transform:scaleX(0.926);right:346px;transform-origin:100% 50%;">bal...</div>
<div class="t" style="top:100.0px;height:16.0px;line-height:16.0px;font-size:9.9px;color:#1a1a1a;transform:scaleX(0.881);right:6px;transform-origin:100% 50%;">5 000.00</div>
<div class="a" style="left:383.5px;top:116.0px;width:513.5px;height:16.0px;background:#efefef;"></div>
<div class="a" style="left:383.5px;top:131.0px;width:513.5px;height:1px;background:#e2e2e2"></div>
<svg style="left:384.5px;top:117.5px" width="13" height="15" viewBox="0 0 13 15"><path d="M0.6 0.6h6l3 3v9h-9z" fill="#fafafa" stroke="#5a5a5a" stroke-width="0.9"/><path d="M6.6 0.6v3h3" fill="none" stroke="#5a5a5a" stroke-width="0.8"/><circle cx="9" cy="11.4" r="2.9" fill="#e84a1a" stroke="#a03010" stroke-width="0.5"/><circle cx="8.6" cy="11" r="1.1" fill="#fff" opacity="0.45"/></svg>
<div class="a" style="left:426px;top:116.0px;width:1px;height:16.0px;background:#e2e2e2"></div>
<div class="a" style="left:465px;top:116.0px;width:1px;height:16.0px;background:#e2e2e2"></div>
<div class="a" style="left:528px;top:116.0px;width:1px;height:16.0px;background:#e2e2e2"></div>
<div class="a" style="left:557px;top:116.0px;width:1px;height:16.0px;background:#e2e2e2"></div>
<div class="a" style="left:591px;top:116.0px;width:1px;height:16.0px;background:#e2e2e2"></div>
<div class="a" style="left:615px;top:116.0px;width:1px;height:16.0px;background:#e2e2e2"></div>
<div class="a" style="left:650px;top:116.0px;width:1px;height:16.0px;background:#e2e2e2"></div>
<div class="a" style="left:683px;top:116.0px;width:1px;height:16.0px;background:#e2e2e2"></div>
<div class="a" style="left:717px;top:116.0px;width:1px;height:16.0px;background:#e2e2e2"></div>
<div class="a" style="left:780px;top:116.0px;width:1px;height:16.0px;background:#e2e2e2"></div>
<div class="a" style="left:814px;top:116.0px;width:1px;height:16.0px;background:#e2e2e2"></div>
<div class="a" style="left:853px;top:116.0px;width:1px;height:16.0px;background:#e2e2e2"></div>
<div class="t" style="top:116.0px;height:16.0px;line-height:16.0px;font-size:9.9px;color:#1a1a1a;transform:scaleX(0.891);left:399px;transform-origin:0 50%;">414...</div>
<div class="t" style="top:116.0px;height:16.0px;line-height:16.0px;font-size:9.9px;color:#1a1a1a;transform:scaleX(0.886);left:430px;transform-origin:0 50%;">64377...</div>
<div class="t" style="top:116.0px;height:16.0px;line-height:16.0px;font-size:9.9px;color:#1a1a1a;transform:scaleX(0.888);left:472px;transform-origin:0 50%;">2020.02.04 ...</div>
<div class="t" style="top:116.0px;height:16.0px;line-height:16.0px;font-size:9.9px;color:#1a1a1a;transform:scaleX(0.926);right:346px;transform-origin:100% 50%;">sell</div>
<div class="t" style="top:116.0px;height:16.0px;line-height:16.0px;font-size:9.9px;color:#1a1a1a;transform:scaleX(0.926);left:564.5px;transform-origin:0 50%;">gbp...</div>
<div class="t" style="top:116.0px;height:16.0px;line-height:16.0px;font-size:9.9px;color:#1a1a1a;transform:scaleX(0.896);left:595.5px;transform-origin:0 50%;">10...</div>
<div class="t" style="top:116.0px;height:16.0px;line-height:16.0px;font-size:9.9px;color:#1a1a1a;transform:scaleX(0.879);left:619.5px;transform-origin:0 50%;">2.0039</div>
<div class="t" style="top:116.0px;height:16.0px;line-height:16.0px;font-size:9.9px;color:#1a1a1a;transform:scaleX(0.879);left:653px;transform-origin:0 50%;">0.0000</div>
<div class="t" style="top:116.0px;height:16.0px;line-height:16.0px;font-size:9.9px;color:#1a1a1a;transform:scaleX(0.879);left:688px;transform-origin:0 50%;">0.0000</div>
<div class="t" style="top:116.0px;height:16.0px;line-height:16.0px;font-size:9.9px;color:#1a1a1a;transform:scaleX(0.888);left:723.5px;transform-origin:0 50%;">2020.02.04 ...</div>
<div class="t" style="top:116.0px;height:16.0px;line-height:16.0px;font-size:9.9px;color:#1a1a1a;transform:scaleX(0.879);left:784.5px;transform-origin:0 50%;">2.0051</div>
<div class="t" style="top:116.0px;height:16.0px;line-height:16.0px;font-size:9.9px;color:#1a1a1a;transform:scaleX(0.881);right:50.5px;transform-origin:100% 50%;">0.00</div>
<div class="t" style="top:116.0px;height:16.0px;line-height:16.0px;font-size:9.9px;color:#1a1a1a;transform:scaleX(0.885);right:6px;transform-origin:100% 50%;">-70.22</div>
<div class="a" style="left:383.5px;top:132.0px;width:513.5px;height:16.0px;background:#ffffff;"></div>
<div class="a" style="left:383.5px;top:147.0px;width:513.5px;height:1px;background:#e2e2e2"></div>
<svg style="left:384.5px;top:133.5px" width="13" height="15" viewBox="0 0 13 15"><path d="M0.6 0.6h6l3 3v9h-9z" fill="#fafafa" stroke="#5a5a5a" stroke-width="0.9"/><path d="M6.6 0.6v3h3" fill="none" stroke="#5a5a5a" stroke-width="0.8"/><circle cx="9" cy="11.4" r="2.9" fill="#2a8ee0" stroke="#1d5fa0" stroke-width="0.5"/><circle cx="8.6" cy="11" r="1.1" fill="#fff" opacity="0.45"/></svg>
<div class="a" style="left:426px;top:132.0px;width:1px;height:16.0px;background:#e2e2e2"></div>
<div class="a" style="left:465px;top:132.0px;width:1px;height:16.0px;background:#e2e2e2"></div>
<div class="a" style="left:528px;top:132.0px;width:1px;height:16.0px;background:#e2e2e2"></div>
<div class="a" style="left:557px;top:132.0px;width:1px;height:16.0px;background:#e2e2e2"></div>
<div class="a" style="left:591px;top:132.0px;width:1px;height:16.0px;background:#e2e2e2"></div>
<div class="a" style="left:615px;top:132.0px;width:1px;height:16.0px;background:#e2e2e2"></div>
<div class="a" style="left:650px;top:132.0px;width:1px;height:16.0px;background:#e2e2e2"></div>
<div class="a" style="left:683px;top:132.0px;width:1px;height:16.0px;background:#e2e2e2"></div>
<div class="a" style="left:717px;top:132.0px;width:1px;height:16.0px;background:#e2e2e2"></div>
<div class="a" style="left:780px;top:132.0px;width:1px;height:16.0px;background:#e2e2e2"></div>
<div class="a" style="left:814px;top:132.0px;width:1px;height:16.0px;background:#e2e2e2"></div>
<div class="a" style="left:853px;top:132.0px;width:1px;height:16.0px;background:#e2e2e2"></div>
<div class="t" style="top:132.0px;height:16.0px;line-height:16.0px;font-size:9.9px;color:#1a1a1a;transform:scaleX(0.891);left:399px;transform-origin:0 50%;">414...</div>
<div class="t" style="top:132.0px;height:16.0px;line-height:16.0px;font-size:9.9px;color:#1a1a1a;transform:scaleX(0.886);left:430px;transform-origin:0 50%;">64377...</div>
<div class="t" style="top:132.0px;height:16.0px;line-height:16.0px;font-size:9.9px;color:#1a1a1a;transform:scaleX(0.888);left:472px;transform-origin:0 50%;">2020.02.04 ...</div>
<div class="t" style="top:132.0px;height:16.0px;line-height:16.0px;font-size:9.9px;color:#1a1a1a;transform:scaleX(0.926);right:346px;transform-origin:100% 50%;">buy</div>
<div class="t" style="top:132.0px;height:16.0px;line-height:16.0px;font-size:9.9px;color:#1a1a1a;transform:scaleX(0.926);left:564.5px;transform-origin:0 50%;">gbp...</div>
<div class="t" style="top:132.0px;height:16.0px;line-height:16.0px;font-size:9.9px;color:#1a1a1a;transform:scaleX(0.881);left:595.5px;transform-origin:0 50%;">0.00</div>
<div class="t" style="top:132.0px;height:16.0px;line-height:16.0px;font-size:9.9px;color:#1a1a1a;transform:scaleX(0.879);left:619.5px;transform-origin:0 50%;">2.0051</div>
<div class="t" style="top:132.0px;height:16.0px;line-height:16.0px;font-size:9.9px;color:#1a1a1a;transform:scaleX(0.879);left:653px;transform-origin:0 50%;">0.0000</div>
<div class="t" style="top:132.0px;height:16.0px;line-height:16.0px;font-size:9.9px;color:#1a1a1a;transform:scaleX(0.879);left:688px;transform-origin:0 50%;">0.0000</div>
<div class="t" style="top:132.0px;height:16.0px;line-height:16.0px;font-size:9.9px;color:#1a1a1a;transform:scaleX(0.888);left:723.5px;transform-origin:0 50%;">2020.02.04 ...</div>
<div class="t" style="top:132.0px;height:16.0px;line-height:16.0px;font-size:9.9px;color:#1a1a1a;transform:scaleX(0.879);left:784.5px;transform-origin:0 50%;">2.0051</div>
<div class="t" style="top:132.0px;height:16.0px;line-height:16.0px;font-size:9.9px;color:#1a1a1a;transform:scaleX(0.881);right:50.5px;transform-origin:100% 50%;">0.00</div>
<div class="t" style="top:132.0px;height:16.0px;line-height:16.0px;font-size:9.9px;color:#1a1a1a;transform:scaleX(0.881);right:6px;transform-origin:100% 50%;">0.00</div>
<div class="a" style="left:383px;top:148px;width:514px;height:17px;background:#cdcdcd;"></div>
<svg style="left:385px;top:151px" width="10" height="11" viewBox="0 0 10 11"><rect x="0.5" y="0.5" width="9" height="10" fill="#fff" stroke="#777" stroke-width="0.8"/><path d="M3.6 2h2.8v2.6h1.8L5 8.4L1.8 4.6h1.8z" fill="#e03010"/></svg>
<div class="t" style="top:148px;height:17px;line-height:17px;font-size:10.3px;color:#111;transform:scaleX(0.932);font-weight:bold;left:398px;transform-origin:0 50%;">Депозит: 11 053.50&nbsp; Кредит: 0.00&nbsp; Снятие: 0.00</div>
<div class="t" style="top:148px;height:17px;line-height:17px;font-size:10.3px;color:#111;transform:scaleX(0.933);font-weight:bold;right:6px;transform-origin:100% 50%;">-77.62</div>
<div class="a" style="left:383px;top:389px;width:514px;height:15px;background:#f0f0f0;"></div>
<div class="a" style="left:383px;top:390px;width:60px;height:14px;background:#eaeaea;"></div>
<div class="a" style="left:383px;top:389px;width:60px;height:1px;background:#303030"></div>
<div class="a" style="left:504px;top:389px;width:393px;height:1px;background:#303030"></div>
<div class="a" style="left:443px;top:389px;width:61px;height:15px;background:#fff;border:1px solid #303030;border-top:none"></div>
<div class="t" style="top:390px;height:15px;line-height:15px;font-size:9.9px;color:#888;transform:scaleX(0.924);left:390.5px;transform-origin:0 50%;">Ордеры: 1</div>
<div class="t" style="top:389px;height:15px;line-height:15px;font-size:9.9px;color:#111;transform:scaleX(0.922);left:449px;transform-origin:0 50%;">История: 4</div>
<div class="t" style="top:389px;height:15px;line-height:15px;font-size:9.9px;color:#888;transform:scaleX(0.919);left:511px;transform-origin:0 50%;">Новый: 2</div>
<div class="t" style="top:389px;height:15px;line-height:15px;font-size:9.9px;color:#888;transform:scaleX(0.92);left:564px;transform-origin:0 50%;">Закрыть: 1</div>
<div class="t" style="top:389px;height:15px;line-height:15px;font-size:9.9px;color:#888;transform:scaleX(0.932);left:626px;transform-origin:0 50%;">Встречные</div>
<div class="t" style="top:389px;height:15px;line-height:15px;font-size:9.9px;color:#888;transform:scaleX(0.926);left:687px;transform-origin:0 50%;">Перекрытые</div>
<div class="t" style="top:389px;height:15px;line-height:15px;font-size:9.9px;color:#888;transform:scaleX(0.925);left:755.5px;transform-origin:0 50%;">Отложенный: 1</div>
<div class="t" style="top:389px;height:15px;line-height:15px;font-size:9.9px;color:#888;transform:scaleX(0.921);left:836px;transform-origin:0 50%;">Изменить: 1</div>
<div class="a" style="left:557.5px;top:391px;width:1px;height:11px;background:#909090"></div>
<div class="a" style="left:619.5px;top:391px;width:1px;height:11px;background:#909090"></div>
<div class="a" style="left:680px;top:391px;width:1px;height:11px;background:#909090"></div>
<div class="a" style="left:748.5px;top:391px;width:1px;height:11px;background:#909090"></div>
<div class="a" style="left:828.5px;top:391px;width:1px;height:11px;background:#909090"></div>
<div class="a" style="left:893.5px;top:391px;width:1px;height:11px;background:#909090"></div>
<svg style="left:4.5px;top:411px" width="5" height="4" viewBox="0 0 5 4"><path d="M0.4 0.3L4.6 3.7M4.6 0.3L0.4 3.7" stroke="#111" stroke-width="1.1"/></svg>
<div class="a" style="left:2px;top:420px;width:10.5px;height:142px;background:linear-gradient(to bottom,#dbe7f3,#bccde0);"></div>
<div class="t" style="left:7.6px;top:527.5px;height:12px;line-height:12px;font-size:9.9px;color:#111;transform:translate(-50%,-50%) rotate(-90deg) scaleX(0.85);transform-origin:50% 50%">Инструментарий</div>
<div class="a" style="left:13px;top:408px;width:422px;height:138px;background:#ffffff;"></div>
<div class="a" style="left:13px;top:408px;width:1px;height:138px;background:#a0a0a0"></div>
<div class="a" style="left:13px;top:408px;width:422px;height:1px;background:#a0a0a0"></div>
<div class="a" style="left:435px;top:408px;width:1px;height:138px;background:#d4d4d4"></div>
<div class="a" style="left:437px;top:408px;width:1px;height:156px;background:#a8a8a8"></div>
<div class="a" style="left:420px;top:409px;width:14px;height:137px;background:#f0f0f0;"></div>
<svg style="left:423px;top:414px" width="8" height="5" viewBox="0 0 8 5"><path d="M0.7 4.3L4 1L7.3 4.3" stroke="#606060" stroke-width="1.2" fill="none"/></svg>
<div class="a" style="left:421px;top:423.5px;width:12px;height:50px;background:#cdcdcd;"></div>
<svg style="left:423px;top:537px" width="8" height="5" viewBox="0 0 8 5"><path d="M0.7 0.7L4 4L7.3 0.7" stroke="#606060" stroke-width="1.2" fill="none"/></svg>
<div class="t" style="top:409px;height:20px;line-height:20px;font-size:9.9px;color:#111;transform:scaleX(0.926);left:18.5px;transform-origin:0 50%;">Время</div>
<div class="a" style="left:114px;top:409px;width:1px;height:20px;background:#e6e6e6"></div>
<div class="t" style="top:409px;height:20px;line-height:20px;font-size:9.9px;color:#111;transform:scaleX(0.928);left:119.5px;transform-origin:0 50%;">Сообщение</div>
<div class="a" style="left:14px;top:429.0px;width:406px;height:16.0px;background:#efefef;"></div>
<div class="a" style="left:14px;top:444.0px;width:406px;height:1px;background:#e0e0e0"></div>
<div class="a" style="left:114px;top:429.0px;width:1px;height:16.0px;background:#e0e0e0"></div>
<svg style="left:17.4px;top:432.1px" width="8" height="8" viewBox="0 0 8 8"><circle cx="4" cy="4" r="2.7" fill="#e6e6e6" stroke="#7c7c7c" stroke-width="1.3"/><circle cx="4" cy="4" r="0.8" fill="#7c7c7c"/></svg>
<div class="t" style="top:429.0px;height:16.0px;line-height:16.0px;font-size:9.9px;color:#1a1a1a;transform:scaleX(0.887);left:31.5px;transform-origin:0 50%;">2020.02.04 10:29:...</div>
<div class="t" style="top:429.0px;height:16.0px;line-height:16.0px;font-size:9.9px;color:#1a1a1a;transform:scaleX(0.888);left:119.5px;transform-origin:0 50%;">'64377234': order is open : #414378576 sell 10.00 GBPNZD at 2.00470 sl...</div>
<div class="a" style="left:14px;top:445.0px;width:406px;height:16.0px;background:#ffffff;"></div>
<div class="a" style="left:14px;top:460.0px;width:406px;height:1px;background:#e0e0e0"></div>
<div class="a" style="left:114px;top:445.0px;width:1px;height:16.0px;background:#e0e0e0"></div>
<svg style="left:17.4px;top:448.1px" width="8" height="8" viewBox="0 0 8 8"><circle cx="4" cy="4" r="2.7" fill="#e6e6e6" stroke="#7c7c7c" stroke-width="1.3"/><circle cx="4" cy="4" r="0.8" fill="#7c7c7c"/></svg>
<div class="t" style="top:445.0px;height:16.0px;line-height:16.0px;font-size:9.9px;color:#1a1a1a;transform:scaleX(0.887);left:31.5px;transform-origin:0 50%;">2020.02.04 10:29:...</div>
<div class="t" style="top:445.0px;height:16.0px;line-height:16.0px;font-size:9.9px;color:#1a1a1a;transform:scaleX(0.889);left:119.5px;transform-origin:0 50%;">'64377234': instant order sell 10.00 GBPNZD at 2.00470 sl: 0.00000 tp: 0...</div>
<div class="a" style="left:14px;top:461.0px;width:406px;height:16.0px;background:#efefef;"></div>
<div class="a" style="left:14px;top:476.0px;width:406px;height:1px;background:#e0e0e0"></div>
<div class="a" style="left:114px;top:461.0px;width:1px;height:16.0px;background:#e0e0e0"></div>
<svg style="left:17.4px;top:464.1px" width="8" height="8" viewBox="0 0 8 8"><circle cx="4" cy="4" r="2.7" fill="#e6e6e6" stroke="#7c7c7c" stroke-width="1.3"/><circle cx="4" cy="4" r="0.8" fill="#7c7c7c"/></svg>
<div class="t" style="top:461.0px;height:16.0px;line-height:16.0px;font-size:9.9px;color:#1a1a1a;transform:scaleX(0.887);left:31.5px;transform-origin:0 50%;">2020.02.04 10:28:...</div>
<div class="t" style="top:461.0px;height:16.0px;line-height:16.0px;font-size:9.9px;color:#1a1a1a;transform:scaleX(0.897);left:119.5px;transform-origin:0 50%;">'64377238': order #414378503 was closed by #414378508</div>
<div class="a" style="left:14px;top:477.0px;width:406px;height:16.0px;background:#ffffff;"></div>
<div class="a" style="left:14px;top:492.0px;width:406px;height:1px;background:#e0e0e0"></div>
<div class="a" style="left:114px;top:477.0px;width:1px;height:16.0px;background:#e0e0e0"></div>
<svg style="left:17.4px;top:480.1px" width="8" height="8" viewBox="0 0 8 8"><circle cx="4" cy="4" r="2.7" fill="#e6e6e6" stroke="#7c7c7c" stroke-width="1.3"/><circle cx="4" cy="4" r="0.8" fill="#7c7c7c"/></svg>
<div class="t" style="top:477.0px;height:16.0px;line-height:16.0px;font-size:9.9px;color:#1a1a1a;transform:scaleX(0.887);left:31.5px;transform-origin:0 50%;">2020.02.04 10:28:...</div>
<div class="t" style="top:477.0px;height:16.0px;line-height:16.0px;font-size:9.9px;color:#1a1a1a;transform:scaleX(0.887);left:119.5px;transform-origin:0 50%;">'64377238': close order #414378503 sell 10.00 GBPNZD at 2.00390 sl: 0....</div>
<div class="a" style="left:14px;top:493.0px;width:406px;height:16.0px;background:#0078d7;"></div>
<div class="a" style="left:114px;top:493.0px;width:1px;height:16.0px;background:#a8c8ec"></div>
<svg style="left:17.4px;top:496.1px" width="8" height="8" viewBox="0 0 8 8"><circle cx="4" cy="4" r="2.7" fill="#5a9ae0" stroke="#c0d4ea" stroke-width="1.3"/><circle cx="4" cy="4" r="0.8" fill="#c0d4ea"/></svg>
<div class="t" style="top:493.0px;height:16.0px;line-height:16.0px;font-size:9.9px;color:#fff;transform:scaleX(0.887);left:31.5px;transform-origin:0 50%;">2020.02.04 10:28:...</div>
<div class="t" style="top:493.0px;height:16.0px;line-height:16.0px;font-size:9.9px;color:#fff;transform:scaleX(0.888);left:119.5px;transform-origin:0 50%;">'64377238': order is open : #414378508 buy 10.00 GBPNZD at 2.00510 s...</div>
<div class="a" style="left:14px;top:509.0px;width:406px;height:16.0px;background:#ffffff;"></div>
<div class="a" style="left:14px;top:524.0px;width:406px;height:1px;background:#e0e0e0"></div>
<div class="a" style="left:114px;top:509.0px;width:1px;height:16.0px;background:#e0e0e0"></div>
<svg style="left:17.4px;top:512.1px" width="8" height="8" viewBox="0 0 8 8"><circle cx="4" cy="4" r="2.7" fill="#e6e6e6" stroke="#7c7c7c" stroke-width="1.3"/><circle cx="4" cy="4" r="0.8" fill="#7c7c7c"/></svg>
<div class="t" style="top:509.0px;height:16.0px;line-height:16.0px;font-size:9.9px;color:#1a1a1a;transform:scaleX(0.887);left:31.5px;transform-origin:0 50%;">2020.02.04 10:28:...</div>
<div class="t" style="top:509.0px;height:16.0px;line-height:16.0px;font-size:9.9px;color:#1a1a1a;transform:scaleX(0.89);left:119.5px;transform-origin:0 50%;">'64377238': instant order buy 10.00 GBPNZD at 2.00510 sl: 0.00000 tp: 0...</div>
<div class="a" style="left:14px;top:525.0px;width:406px;height:16.0px;background:#efefef;"></div>
<div class="a" style="left:14px;top:540.0px;width:406px;height:1px;background:#e0e0e0"></div>
<div class="a" style="left:114px;top:525.0px;width:1px;height:16.0px;background:#e0e0e0"></div>
<svg style="left:17.4px;top:528.1px" width="8" height="8" viewBox="0 0 8 8"><circle cx="4" cy="4" r="2.7" fill="#e6e6e6" stroke="#7c7c7c" stroke-width="1.3"/><circle cx="4" cy="4" r="0.8" fill="#7c7c7c"/></svg>
<div class="t" style="top:525.0px;height:16.0px;line-height:16.0px;font-size:9.9px;color:#1a1a1a;transform:scaleX(0.887);left:31.5px;transform-origin:0 50%;">2020.02.04 10:28:...</div>
<div class="t" style="top:525.0px;height:16.0px;line-height:16.0px;font-size:9.9px;color:#1a1a1a;transform:scaleX(0.888);left:119.5px;transform-origin:0 50%;">'64377238': order is open : #414378503 sell 10.00 GBPNZD at 2.00390 sl...</div>
<div class="a" style="left:13px;top:547px;width:423px;height:16px;background:#f0f0f0;"></div>
<div class="a" style="left:13px;top:546px;width:186px;height:1px;background:#303030"></div>
<div class="a" style="left:247px;top:546px;width:187px;height:1px;background:#303030"></div>
<div class="a" style="left:199px;top:546px;width:49px;height:15.5px;background:#fff;border:1px solid #303030;border-top:none"></div>
<div class="t" style="top:546px;height:15px;line-height:15px;font-size:9.9px;color:#888;transform:scaleX(0.929);left:22.5px;transform-origin:0 50%;">Новости</div>
<div class="a" style="left:65.5px;top:549px;width:1px;height:10px;background:#909090"></div>
<div class="t" style="top:546px;height:15px;line-height:15px;font-size:9.9px;color:#888;transform:scaleX(0.926);left:72.5px;transform-origin:0 50%;">Сигналы</div>
<div class="a" style="left:117px;top:549px;width:1px;height:10px;background:#909090"></div>
<div class="t" style="top:546px;height:15px;line-height:15px;font-size:9.9px;color:#888;transform:scaleX(0.93);left:124px;transform-origin:0 50%;">Почтовый ящик</div>
<div class="t" style="top:546px;height:15px;line-height:15px;font-size:9.9px;color:#111;transform:scaleX(0.932);left:205.5px;transform-origin:0 50%;">Журнал</div>
<svg style="left:441.5px;top:411px" width="5" height="4" viewBox="0 0 5 4"><path d="M0.4 0.3L4.6 3.7M4.6 0.3L0.4 3.7" stroke="#111" stroke-width="1.1"/></svg>
<div class="a" style="left:439.5px;top:420px;width:10.5px;height:142px;background:linear-gradient(to bottom,#dbe7f3,#bccde0);"></div>
<div class="t" style="left:444.8px;top:548.5px;height:12px;line-height:12px;font-size:9.9px;color:#111;transform:translate(-50%,-50%) rotate(-90deg) scaleX(0.85);transform-origin:50% 50%">Счета</div>
<div class="a" style="left:450px;top:408px;width:447px;height:156px;background:#ffffff;"></div>
<div class="a" style="left:450px;top:407.5px;width:1px;height:157px;background:#a0a0a0"></div>
<div class="a" style="left:450px;top:407.5px;width:448px;height:1px;background:#a0a0a0"></div>
<div class="a" style="left:524px;top:409px;width:1px;height:20px;background:#e6e6e6"></div>
<div class="a" style="left:671.5px;top:409px;width:1px;height:20px;background:#e6e6e6"></div>
<div class="a" style="left:745.5px;top:409px;width:1px;height:20px;background:#e6e6e6"></div>
<div class="a" style="left:818.5px;top:409px;width:1px;height:20px;background:#e6e6e6"></div>
<div class="t" style="top:409px;height:20px;line-height:20px;font-size:9.9px;color:#111;transform:scaleX(0.926);left:456.5px;transform-origin:0 50%;">Логин</div>
<div class="t" style="top:409px;height:20px;line-height:20px;font-size:9.9px;color:#111;transform:scaleX(0.926);left:530px;transform-origin:0 50%;">Имя</div>
<div class="t" style="top:409px;height:20px;line-height:20px;font-size:9.9px;color:#111;transform:scaleX(0.926);right:158px;transform-origin:100% 50%;">Баланс</div>
<div class="t" style="top:409px;height:20px;line-height:20px;font-size:9.9px;color:#111;transform:scaleX(0.933);right:86.5px;transform-origin:100% 50%;">Средства</div>
<div class="t" style="top:409px;height:20px;line-height:20px;font-size:9.9px;color:#111;transform:scaleX(0.94);right:8px;transform-origin:100% 50%;">Уровень</div>
<div class="a" style="left:450.5px;top:429px;width:446.5px;height:16px;background:#efefef;"></div>
<div class="a" style="left:524px;top:429px;width:1px;height:16px;background:#e0e0e0"></div>
<div class="a" style="left:671.5px;top:429px;width:1px;height:16px;background:#e0e0e0"></div>
<div class="a" style="left:745.5px;top:429px;width:1px;height:16px;background:#e0e0e0"></div>
<div class="a" style="left:818.5px;top:429px;width:1px;height:16px;background:#e0e0e0"></div>
<div class="a" style="left:450.5px;top:444px;width:446.5px;height:1px;background:#e0e0e0"></div>
<svg style="left:453px;top:429.8px" width="12" height="14" viewBox="0 0 11 13.5"><g transform="translate(0.5 0) scale(0.95)"><path d="M0.6 13.6C0.6 9.6 2.4 8.4 5 8.4C7.6 8.4 9.4 9.6 9.4 13.6Z" fill="#2db82d" stroke="#168a16" stroke-width="0.7"/><path d="M3.7 8.6L5 11.6L6.3 8.6Z" fill="#e8f8e8"/><circle cx="5" cy="4.6" r="3.2" fill="#f2c200" stroke="#a87c00" stroke-width="0.7"/><path d="M2.2 3.6Q5 0.6 7.8 3.6Q5 2.6 2.2 3.6Z" fill="#a87c00" opacity="0.6"/></g></svg>
<div class="t" style="top:429px;height:16px;line-height:16px;font-size:9.9px;color:#1a1a1a;transform:scaleX(0.874);left:466.5px;transform-origin:0 50%;">64377234</div>
<div class="t" style="top:429px;height:16px;line-height:16px;font-size:9.9px;color:#1a1a1a;transform:scaleX(0.918);left:527px;transform-origin:0 50%;">Ku Tasut</div>
<div class="t" style="top:429px;height:16px;line-height:16px;font-size:9.9px;color:#1a1a1a;transform:scaleX(0.881);right:158px;transform-origin:100% 50%;">5 000.00</div>
<div class="t" style="top:429px;height:16px;line-height:16px;font-size:9.9px;color:#1a1a1a;transform:scaleX(0.881);right:86.5px;transform-origin:100% 50%;">4 929.81</div>
<div class="t" style="top:429px;height:16px;line-height:16px;font-size:9.9px;color:#1a1a1a;transform:scaleX(0.889);right:8px;transform-origin:100% 50%;">840.19%</div>
<div class="a" style="left:450.5px;top:445px;width:446.5px;height:16px;background:#0078d7;"></div>
<div class="a" style="left:524px;top:445px;width:1px;height:16px;background:#a8c8ec"></div>
<div class="a" style="left:671.5px;top:445px;width:1px;height:16px;background:#a8c8ec"></div>
<div class="a" style="left:745.5px;top:445px;width:1px;height:16px;background:#a8c8ec"></div>
<div class="a" style="left:818.5px;top:445px;width:1px;height:16px;background:#a8c8ec"></div>
<svg style="left:453px;top:445.8px" width="12" height="14" viewBox="0 0 11 13.5"><g transform="translate(0.5 0) scale(0.95)"><path d="M0.6 13.6C0.6 9.6 2.4 8.4 5 8.4C7.6 8.4 9.4 9.6 9.4 13.6Z" fill="#2db82d" stroke="#168a16" stroke-width="0.7"/><path d="M3.7 8.6L5 11.6L6.3 8.6Z" fill="#e8f8e8"/><circle cx="5" cy="4.6" r="3.2" fill="#f2c200" stroke="#a87c00" stroke-width="0.7"/><path d="M2.2 3.6Q5 0.6 7.8 3.6Q5 2.6 2.2 3.6Z" fill="#a87c00" opacity="0.6"/></g></svg>
<div class="t" style="top:445px;height:16px;line-height:16px;font-size:9.9px;color:#fff;transform:scaleX(0.874);left:466.5px;transform-origin:0 50%;">64377238</div>
<div class="t" style="top:445px;height:16px;line-height:16px;font-size:9.9px;color:#fff;transform:scaleX(0.887);left:527px;transform-origin:0 50%;">Sa Kasut</div>
<div class="t" style="top:445px;height:16px;line-height:16px;font-size:9.9px;color:#fff;transform:scaleX(0.881);right:158px;transform-origin:100% 50%;">4 929.78</div>
<div class="t" style="top:445px;height:16px;line-height:16px;font-size:9.9px;color:#fff;transform:scaleX(0.881);right:86.5px;transform-origin:100% 50%;">4 929.78</div>
<div class="a" style="left:450.5px;top:461px;width:446.5px;height:16px;background:#cfcfcf;"></div>
<svg style="left:451.5px;top:462px" width="16" height="14" viewBox="0 0 16 14"><g transform="translate(0.3 0) scale(0.95)"><path d="M0.6 13.6C0.6 9.6 2.4 8.4 5 8.4C7.6 8.4 9.4 9.6 9.4 13.6Z" fill="#2db82d" stroke="#168a16" stroke-width="0.7"/><path d="M3.7 8.6L5 11.6L6.3 8.6Z" fill="#e8f8e8"/><circle cx="5" cy="4.6" r="3.2" fill="#f2c200" stroke="#a87c00" stroke-width="0.7"/><path d="M2.2 3.6Q5 0.6 7.8 3.6Q5 2.6 2.2 3.6Z" fill="#a87c00" opacity="0.6"/></g><g transform="translate(5 0.3) scale(0.95)"><path d="M0.6 13.6C0.6 9.6 2.4 8.4 5 8.4C7.6 8.4 9.4 9.6 9.4 13.6Z" fill="#e4b818" stroke="#9a7400" stroke-width="0.7"/><path d="M3.7 8.6L5 11.6L6.3 8.6Z" fill="#e8f8e8"/><circle cx="5" cy="4.6" r="3.2" fill="#f2c200" stroke="#a87c00" stroke-width="0.7"/><path d="M2.2 3.6Q5 0.6 7.8 3.6Q5 2.6 2.2 3.6Z" fill="#a87c00" opacity="0.6"/></g></svg>
<div class="t" style="top:461px;height:16px;line-height:16px;font-size:10.3px;color:#111;transform:scaleX(0.883);font-weight:bold;left:467.5px;transform-origin:0 50%;">Всего, USD</div>
<div class="t" style="top:461px;height:16px;line-height:16px;font-size:10.3px;color:#111;transform:scaleX(0.934);font-weight:bold;right:158px;transform-origin:100% 50%;">10 975.88</div>
<div class="t" style="top:461px;height:16px;line-height:16px;font-size:10.3px;color:#111;transform:scaleX(0.934);font-weight:bold;right:86px;transform-origin:100% 50%;">10 898.30</div>
<div class="a" style="left:897px;top:408px;width:1px;height:156px;background:#f4f4f4"></div>
<div class="a" style="left:1px;top:564px;width:898px;height:18px;background:#f0f0f0;"></div>
<div class="a" style="left:1px;top:564px;width:898px;height:1px;background:#c8c8c8"></div>
<div class="t" style="top:566.5px;height:16px;line-height:16px;font-size:9.9px;color:#111;transform:scaleX(0.95);left:3px;transform-origin:0 50%;">Для справки нажмите F1</div>
<div class="a" style="left:785.5px;top:568px;width:1px;height:13px;background:#a0a0a0"></div>
<div class="t" style="top:566px;height:16px;line-height:16px;font-size:9.9px;color:#111;transform:scaleX(0.882);left:790px;transform-origin:0 50%;">1324 / 4 Kb</div>
<div class="a" style="left:894px;top:578px;width:1.5px;height:1.5px;background:#a0a0a0;"></div>
<div class="a" style="left:891px;top:578px;width:1.5px;height:1.5px;background:#a0a0a0;"></div>
<div class="a" style="left:894px;top:575px;width:1.5px;height:1.5px;background:#a0a0a0;"></div>
<div class="a" style="left:888px;top:578px;width:1.5px;height:1.5px;background:#a0a0a0;"></div>
<div class="a" style="left:891px;top:575px;width:1.5px;height:1.5px;background:#a0a0a0;"></div>
<div class="a" style="left:894px;top:572px;width:1.5px;height:1.5px;background:#a0a0a0;"></div>
</body></html>
